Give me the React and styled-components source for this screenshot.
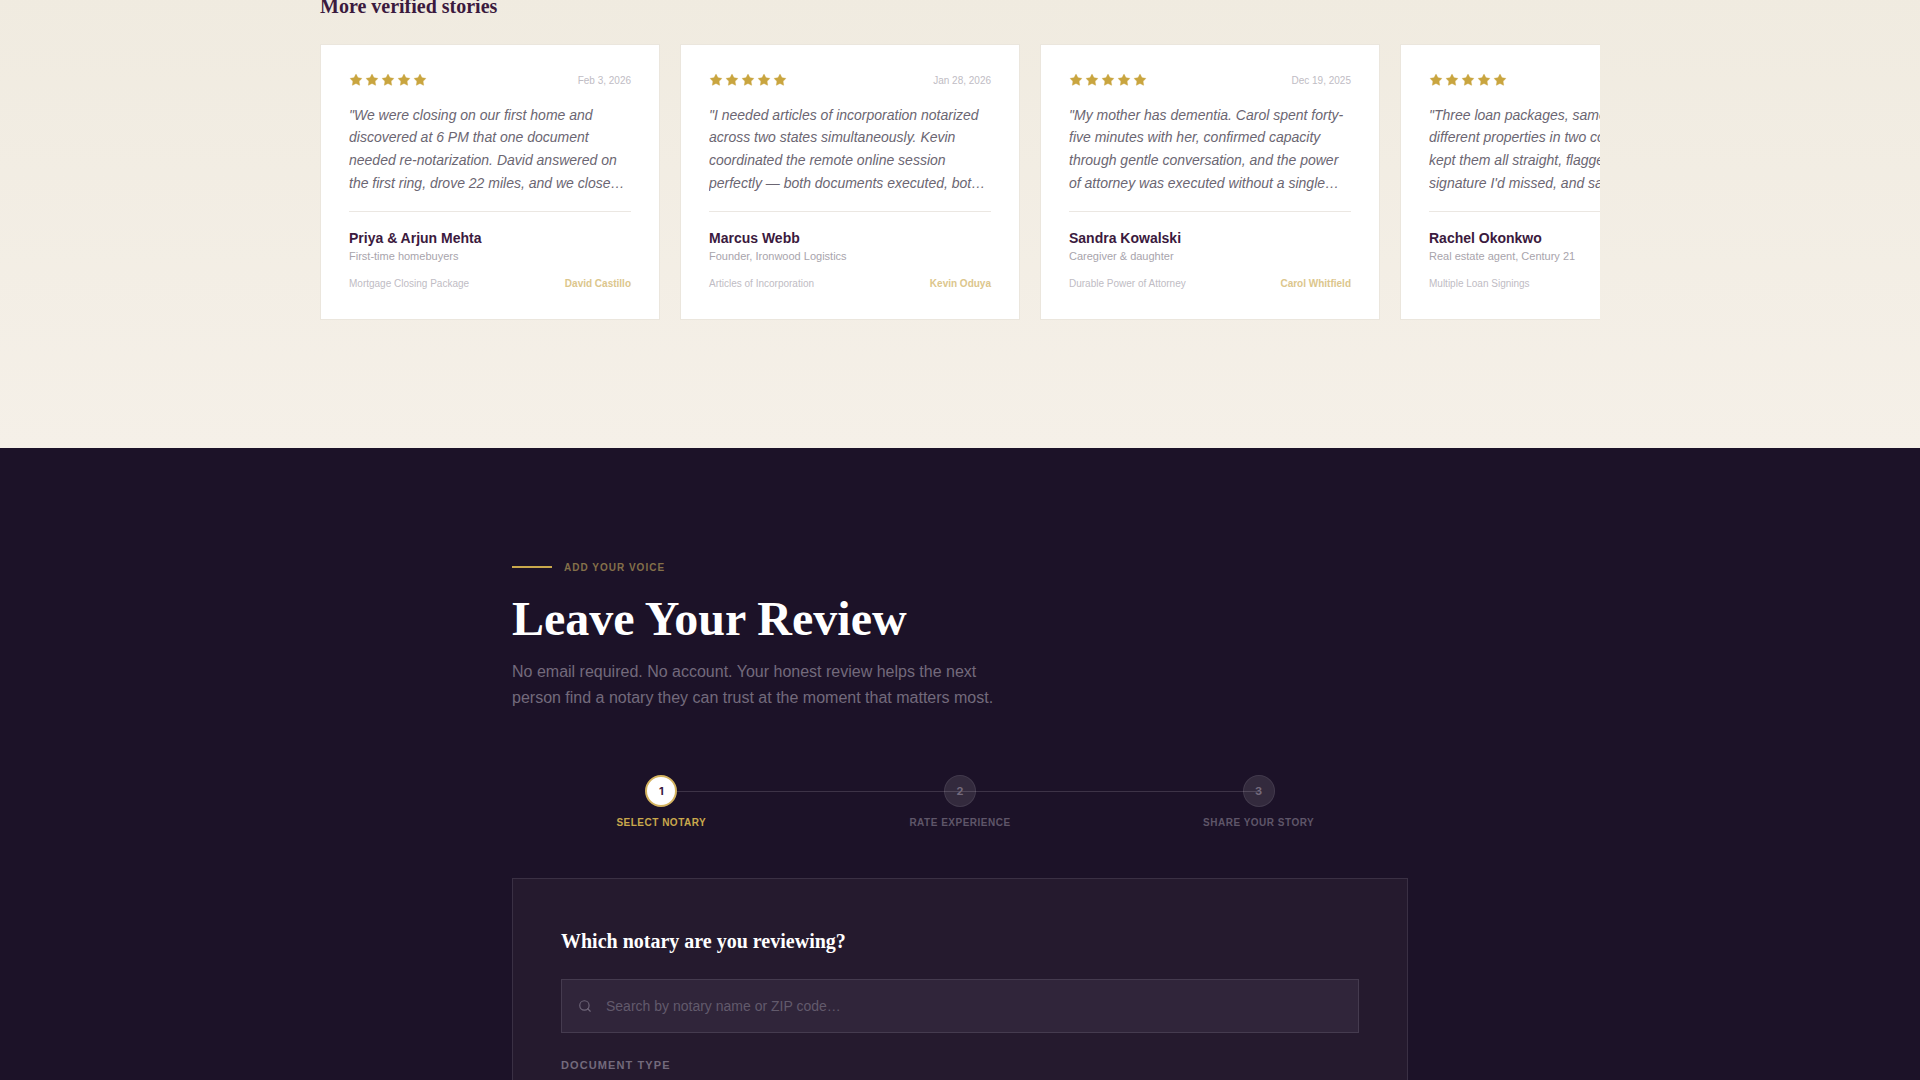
import React from 'react';
import styled, { createGlobalStyle } from 'styled-components';
import { Search, Star } from 'lucide-react';

const GlobalStyle = createGlobalStyle`
    html, body {
        margin: 0;
        padding: 0;
        height: 1080px;
        overflow: hidden;
        background-color: #1c1228;
        font-family: "Liberation Sans", Arial, sans-serif;
    }
    * { box-sizing: border-box; }
`

const stories = [
    {
        date: 'Feb 3, 2026',
        quote: '"We were closing on our first home and discovered at 6 PM that one document needed re-notarization. David answered on the first ring, drove 22 miles, and we closed on time the next morning."',
        name: 'Priya & Arjun Mehta',
        role: 'First-time homebuyers',
        service: 'Mortgage Closing Package',
        notary: 'David Castillo',
    },
    {
        date: 'Jan 28, 2026',
        quote: '"I needed articles of incorporation notarized across two states simultaneously. Kevin coordinated the remote online session perfectly — both documents executed, both states accepted them."',
        name: 'Marcus Webb',
        role: 'Founder, Ironwood Logistics',
        service: 'Articles of Incorporation',
        notary: 'Kevin Oduya',
    },
    {
        date: 'Dec 19, 2025',
        quote: '"My mother has dementia. Carol spent forty-five minutes with her, confirmed capacity through gentle conversation, and the power of attorney was executed without a single moment of distress."',
        name: 'Sandra Kowalski',
        role: 'Caregiver & daughter',
        service: 'Durable Power of Attorney',
        notary: 'Carol Whitfield',
    },
    {
        date: 'Dec 2, 2025',
        quote: '"Three loan packages, same borrower, different properties in two counties. Michelle kept them all straight, flagged every signature I\'d missed, and saved my closing from being pushed back a whole week."',
        name: 'Rachel Okonkwo',
        role: 'Real estate agent, Century 21',
        service: 'Multiple Loan Signings',
        notary: 'Michelle Torres',
    },
];

const steps = ['Select Notary', 'Rate Experience', 'Share Your Story'];

const Page = styled.div`
    width: 1920px;
    height: 1080px;
    overflow: hidden;
`

const StoriesSection = styled.section`
    height: 456px;
    margin-top: -8px;
    background: linear-gradient(180deg, #f0ebe0 0%, #f5f0e8 100%);
    padding-left: 320px;
    padding-right: 320px;
`

const StoriesTitle = styled.h3`
    margin: 0;
    height: 52px;
    font-family: "Liberation Serif", serif;
    font-size: 20px;
    line-height: 28px;
    font-weight: 700;
    color: #3b1a3e;
`

const StoryRow = styled.div`
    display: flex;
    gap: 20px;
    overflow: hidden;
`

const StoryCard = styled.article`
    flex: 0 0 340px;
    height: 276px;
    padding: 28px;
    background-color: #ffffff;
    border: 1px solid #ebe6dd;
    display: flex;
    flex-direction: column;
`

const CardTop = styled.div`
    display: flex;
    justify-content: space-between;
    align-items: center;
    height: 14px;
    margin-bottom: 16.6px;
`

const Stars = styled.div`
    display: flex;
    gap: 2px;
    color: #c9a53f;
`

const DateText = styled.span`
    font-size: 10px;
    color: #c0bcc4;
`

const Quote = styled.p`
    margin: 0;
    font-size: 14px;
    line-height: 22.75px;
    font-style: italic;
    color: #6b6672;
    display: -webkit-box;
    -webkit-box-orient: vertical;
    -webkit-line-clamp: 4;
    overflow: hidden;
`

const Divider = styled.div`
    height: 1px;
    background-color: #ebe7e2;
    margin: 16.4px 0 16px;
`

const Name = styled.div`
    font-size: 14px;
    line-height: 20px;
    font-weight: 700;
    color: #3b1a3e;
`

const Role = styled.div`
    font-size: 11px;
    line-height: 16px;
    color: #a8a4ac;
`

const CardBottom = styled.div`
    display: flex;
    justify-content: space-between;
    margin-top: 13px;
    font-size: 10px;
    line-height: 14px;
`

const Service = styled.span`
    color: #c0bcc4;
`

const NotaryName = styled.span`
    font-weight: 700;
    color: #dcc68c;
`

const ReviewSection = styled.section`
    height: 632px;
    background-color: #1c1228;
    padding: 112px 512px 0;
`

const Eyebrow = styled.div`
    display: flex;
    align-items: center;
    gap: 12px;
    height: 14px;
    font-size: 10px;
    font-weight: 700;
    letter-spacing: 1px;
    text-transform: uppercase;
    color: #84704a;
`

const EyebrowLine = styled.span`
    width: 40px;
    height: 2px;
    background-color: #c9a84c;
`

const Heading = styled.h2`
    margin: 17px 0 0;
    font-family: "Liberation Serif", serif;
    font-size: 48px;
    line-height: 56px;
    font-weight: 700;
    color: #ffffff;
`

const Lead = styled.p`
    margin: 12px 0 0;
    max-width: 500px;
    font-size: 16px;
    line-height: 26px;
    color: #736a7c;
`

const StepRow = styled.ol`
    list-style: none;
    margin: 64px 0 0;
    padding: 0;
    display: grid;
    grid-template-columns: repeat(3, 1fr);
`

const Step = styled.li`
    position: relative;
    display: flex;
    flex-direction: column;
    align-items: center;
    gap: 9px;

    &:not(:last-child)::after {
        content: '';
        position: absolute;
        top: 16px;
        left: 50%;
        width: 100%;
        height: 1px;
        background-color: #3d3347;
    }
`

const StepDot = styled.span`
    position: relative;
    z-index: 1;
    width: 32px;
    height: 32px;
    border-radius: 50%;
    display: flex;
    align-items: center;
    justify-content: center;
    font-family: Inter, sans-serif;
    font-size: 11px;
    font-weight: 700;
    background-color: ${(p) => (p.$active ? '#ffffff' : 'rgba(255, 255, 255, 0.1)')};
    border: ${(p) => (p.$active ? '2px solid #d4b35f' : '1px solid rgba(255, 255, 255, 0.08)')};
    color: ${(p) => (p.$active ? '#3b1a3e' : '#736a7c')};
`

const StepLabel = styled.span`
    font-size: 10px;
    line-height: 14px;
    font-weight: 700;
    letter-spacing: 0.5px;
    text-transform: uppercase;
    color: ${(p) => (p.$active ? '#c9a84c' : '#5f5669')};
`

const FormCard = styled.div`
    margin-top: 48px;
    height: 300px;
    padding: 48px;
    background-color: #251a2e;
    border: 1px solid #3a3044;
`

const FormTitle = styled.h3`
    margin: 0;
    font-family: "Liberation Serif", serif;
    font-size: 20px;
    line-height: 28px;
    font-weight: 700;
    color: #ffffff;
`

const SearchBox = styled.label`
    margin-top: 24px;
    height: 54px;
    display: flex;
    align-items: center;
    gap: 12px;
    padding: 0 16px;
    background-color: #30253a;
    border: 1px solid #453b4f;
    color: #6e6578;
`

const SearchInput = styled.input`
    flex: 1;
    border: 0;
    outline: 0;
    background: transparent;
    font-family: inherit;
    font-size: 14px;
    color: #ffffff;
    padding: 0;
    margin-left: 2px;

    &::placeholder {
        color: #625a6c;
        opacity: 1;
    }
`

const FieldLabel = styled.div`
    margin-top: 24px;
    font-size: 11px;
    line-height: 16px;
    font-weight: 700;
    letter-spacing: 1.1px;
    text-transform: uppercase;
    color: #736a7c;
`

const App = () => {
    return (
        <Page>
            <GlobalStyle />
            <StoriesSection>
                <StoriesTitle>More verified stories</StoriesTitle>
                <StoryRow>
                    {stories.map((s) => (
                        <StoryCard key={s.name}>
                            <CardTop>
                                <Stars>
                                    {[0, 1, 2, 3, 4].map((n) => <Star key={n} size={14} fill="currentColor" strokeWidth={0.5} />)}
                                </Stars>
                                <DateText>{s.date}</DateText>
                            </CardTop>
                            <Quote>{s.quote}</Quote>
                            <Divider />
                            <Name>{s.name}</Name>
                            <Role>{s.role}</Role>
                            <CardBottom>
                                <Service>{s.service}</Service>
                                <NotaryName>{s.notary}</NotaryName>
                            </CardBottom>
                        </StoryCard>
                    ))}
                </StoryRow>
            </StoriesSection>

            <ReviewSection>
                <Eyebrow><EyebrowLine />Add your voice</Eyebrow>
                <Heading>Leave Your Review</Heading>
                <Lead>
                    No email required. No account. Your honest review helps the next person find a notary they can trust at the moment that matters most.
                </Lead>

                <StepRow>
                    {steps.map((label, i) => (
                        <Step key={label}>
                            <StepDot $active={i === 0}>{i + 1}</StepDot>
                            <StepLabel $active={i === 0}>{label}</StepLabel>
                        </Step>
                    ))}
                </StepRow>

                <FormCard>
                    <FormTitle>Which notary are you reviewing?</FormTitle>
                    <SearchBox>
                        <Search size={14} />
                        <SearchInput placeholder="Search by notary name or ZIP code…" />
                    </SearchBox>
                    <FieldLabel>Document type</FieldLabel>
                </FormCard>
            </ReviewSection>
        </Page>
    )
}

export default App
